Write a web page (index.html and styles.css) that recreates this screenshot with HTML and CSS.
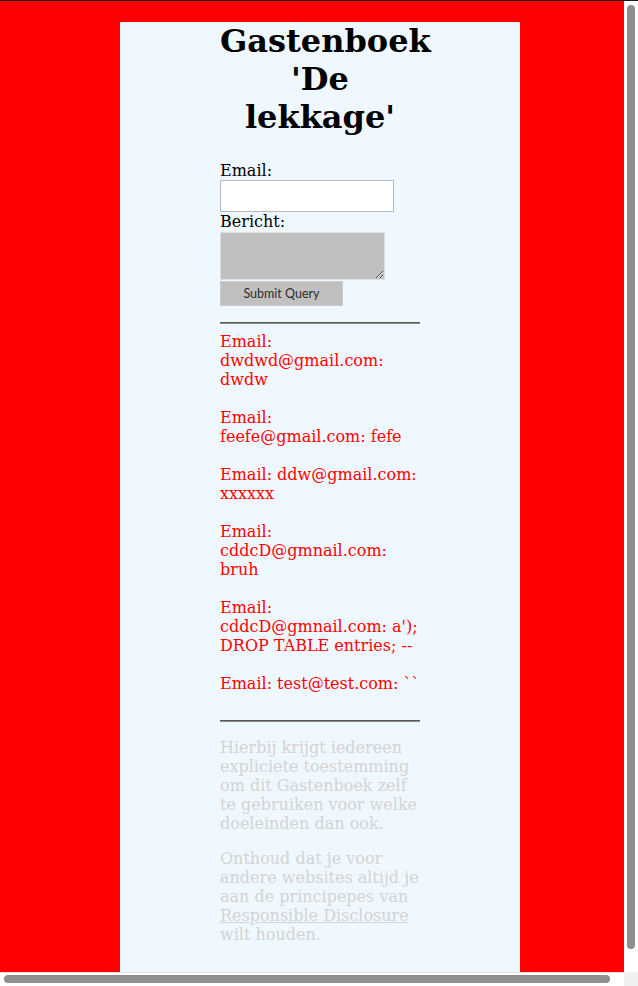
FILE: index.html
```html
<!DOCTYPE html>
<html>
<head>
<meta charset="utf-8">
<title>Gastenboek 'De lekkage'</title>
<link rel="stylesheet" href="styles.css">
</head>
<body>
<div class="topline"></div>
<div class="page">
  <div class="column">
    <h1 class="title">Gastenboek 'De lekkage'</h1>
    <form class="form">
      <label class="label">Email:</label>
      <input class="email" type="text">
      <label class="label label-tight">Bericht:</label>
      <textarea class="message"></textarea>
      <button class="submit" type="button">Submit Query</button>
    </form>
    <hr class="rule">
    <div class="entries">
      Email: dwdwd@gmail.com: dwdw<br><br>
      Email: feefe@gmail.com: fefe<br><br>
      Email: ddw@gmail.com: xxxxxx<br><br>
      Email: cddcD@gmnail.com: bruh<br><br>
      Email: cddcD@gmnail.com: a'); DROP TABLE entries; --<br><br>
      Email: test@test.com: ``<br><br>
    </div>
    <hr class="rule">
    <p class="note">Hierbij krijgt iedereen expliciete toestemming om dit Gastenboek zelf te gebruiken voor welke doeleinden dan ook.</p>
    <p class="note">Onthoud dat je voor andere websites altijd je aan de principepes van <a class="link" href="#">Responsible Disclosure</a> wilt houden.</p>
  </div>
</div>
<div class="vscroll"><div class="vthumb"></div></div>
<div class="hscroll"><div class="hthumb"></div></div>
<div class="corner"></div>
</body>
</html>
```
FILE: styles.css
```css
html {
  overflow: hidden;
  background: #ff0000;
}
body {
  margin: 8px;
  width: 624px;
  background: #ff0000;
  font-family: "DejaVu Serif", serif;
  font-size: 16px;
}
.topline {
  position: fixed;
  top: 0;
  left: 0;
  width: 638px;
  height: 1px;
  background: #1a1a1a;
  z-index: 5;
}
.page {
  width: 400px;
  margin: 14px auto 0;
  background: #f0f8ff;
  min-height: 1000px;
}
.column {
  width: 200px;
  margin: 0 auto;
}
.title {
  margin: 0 0 23px;
  font-size: 32px;
  font-weight: bold;
  text-align: center;
  line-height: 38px;
}
.form {
  display: flex;
  flex-direction: column;
  align-items: flex-start;
}
.label {
  line-height: 19px;
  margin-top: 2px;
}
.label-tight {
  margin-top: 0;
}
.email {
  display: block;
  box-sizing: border-box;
  width: 174px;
  height: 32px;
  margin: 0;
  border: 1px solid #b3b9c2;
  background: #ffffff;
}
.message {
  display: block;
  box-sizing: border-box;
  width: 165px;
  height: 48px;
  margin: 1px 0 0;
  border: 1px solid #dcdfe3;
  background: #c0c0c0;
}
.submit {
  display: block;
  box-sizing: border-box;
  width: 123px;
  height: 25px;
  margin: 1px 0 0;
  padding: 0;
  border: 1px solid #c8ccd2;
  background: #c0c0c0;
  color: #2b2b2b;
  font-family: Lato, "Open Sans", sans-serif;
  font-size: 12.5px;
}
.rule {
  margin: 16px 0 8px;
  border: 0;
  border-top: 1px solid #5a5a5a;
  border-bottom: 1px solid #8a8a8a;
  height: 0;
}
.entries {
  color: #ff0000;
  line-height: 19px;
}
.entries + .rule {
  margin-top: 8px;
}
.note {
  color: #d3d3d3;
  line-height: 19px;
  margin: 16px 0;
}
.link {
  color: #d3d3d3;
}
.vscroll {
  position: fixed;
  top: 1px;
  right: 0;
  width: 14px;
  height: 971px;
  background: #ffffff;
  z-index: 4;
}
.vthumb {
  margin: 4px 0 0 3px;
  width: 8px;
  height: 944px;
  border-radius: 4px;
  background: #8f8f8f;
}
.hscroll {
  position: fixed;
  left: 0;
  bottom: 0;
  width: 624px;
  height: 14px;
  background: #ffffff;
  border-top: 1px solid #e0e0e0;
  box-sizing: border-box;
  z-index: 4;
}
.hthumb {
  margin: 2px 0 0 4px;
  width: 606px;
  height: 8px;
  border-radius: 4px;
  background: #8f8f8f;
}
.corner {
  position: fixed;
  right: 0;
  bottom: 0;
  width: 14px;
  height: 14px;
  background: #f0f0f0;
  z-index: 4;
}
```
